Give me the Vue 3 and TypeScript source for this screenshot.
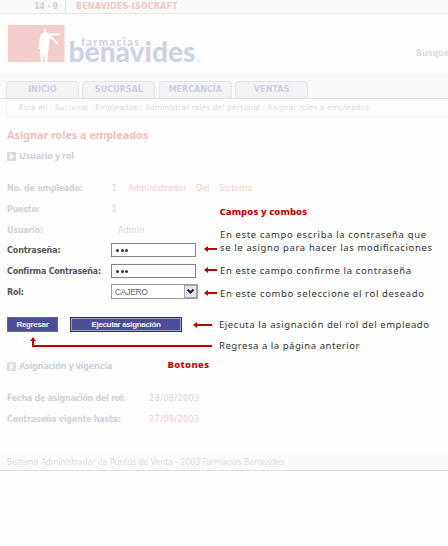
<script setup lang="ts">
interface Note {
  text: string
  x: number
  y: number
  width: number
  title?: boolean
}

const tabs: string[] = ['INICIO', 'SUCURSAL', 'MERCANCÍA', 'VENTAS']

const notes: Note[] = [
  { text: 'Campos y combos', x: 219.5, y: 215, width: 87.5, title: true },
  { text: 'En este campo escriba la contraseña que', x: 220, y: 238, width: 206 },
  { text: 'se le asigno para hacer las modificaciones', x: 220, y: 251, width: 212 },
  { text: 'En este campo confirme la contraseña', x: 220, y: 274, width: 191 },
  { text: 'En este combo seleccione el rol deseado', x: 220, y: 297, width: 204 },
  { text: 'Ejecuta la asignación del rol del empleado', x: 219, y: 328, width: 210 },
  { text: 'Regresa a la página anterior', x: 219, y: 349, width: 140.5 },
  { text: 'Botones', x: 167.5, y: 368, width: 41.5, title: true },
]

const arrows = [
  { x: 204, y: 248, length: 13 },
  { x: 204, y: 269, length: 13 },
  { x: 204, y: 292, length: 13 },
  { x: 193, y: 324, length: 19 },
]
</script>

<template>
  <div class="page">
    <header class="topbar">
      <span class="date">14 - 9</span>
      <span class="branch">BENAVIDES-ISOCRAFT</span>
    </header>

    <div class="brand">
      <svg class="logo" width="200" height="44" viewBox="0 0 200 44">
        <rect x="0" y="3" width="56.500" height="37" fill="#f3cccc" />
        <path d="M36 7.500q1-1.500 2 0v2.500l2 1.200 12 .2v1.600l-9 .3 7 8-1 .8-7-6-.7 5.500L40 29l-.7 11h-2.200L36 30l-.7 10h-2.500L32 27l.5-5-1 5h-1l1-9 1.300-5.800 2.700-1.700z" fill="#fff" />
        <text class="logo-small" x="73" y="24" textLength="58">farmacias</text>
        <text class="logo-big" x="60.500" y="40" textLength="127" lengthAdjust="spacingAndGlyphs">benavides</text>
        <circle cx="190.500" cy="38.500" r="1.500" fill="none" stroke="#d8daea" stroke-width=".7" />
      </svg>
      <span class="search">Busqueda</span>
    </div>

    <nav class="tabs">
      <span v-for="tab in tabs" :key="tab" class="tab">{{ tab }}</span>
    </nav>
    <div class="crumbs">Está en : Sucursal : Empleados : Administrar roles del personal : Asignar roles a empleados</div>

    <main class="content">
      <h1>Asignar roles a empleados</h1>
      <h2 class="user-title">
        <svg width="9" height="9" viewBox="0 0 9 9"><rect width="9" height="9" fill="#d9d9e2" /><path d="M3 1.500 7 4.500 3 7.500z" fill="#fff" /></svg>
        <span>Usuario y rol</span>
      </h2>

      <div class="row first"><b class="label">No. de empleado:</b><span class="value">1</span><span class="red name">Administrador</span><span class="red del">Del</span><span class="red system">Sistema</span></div>
      <div class="row"><b class="label">Puesto:</b><span class="value">1</span></div>
      <div class="row"><b class="label">Usuario:</b><span class="admin">Admin</span></div>
      <div class="row active"><b class="label l-pass">Contraseña:</b><span class="field"><i /><i /><i /></span></div>
      <div class="row active"><b class="label">Confirma Contraseña:</b><span class="field"><i /><i /><i /></span></div>
      <div class="row active">
        <b class="label">Rol:</b>
        <span class="select">
          <span>CAJERO</span>
          <svg width="13" height="13" viewBox="0 0 13 13"><rect x=".5" y=".5" width="12" height="12" fill="#e5e6f0" stroke="#a4a6b5" /><path d="m3.500 4.500 3 3 3-3" fill="none" stroke="#222" stroke-width="2.200" /></svg>
        </span>
      </div>

      <div class="buttons">
        <button type="button" class="back">Regresar</button>
        <button type="button" class="run">Ejecutar asignación</button>
      </div>

      <h2 class="validity-title">
        <svg width="9" height="9" viewBox="0 0 9 9"><rect width="9" height="9" fill="#dedee7" /><path d="M3 1.500 7 4.500 3 7.500z" fill="#fff" /></svg>
        <span>Asignación y vigencia</span>
      </h2>
      <div class="row dates"><b class="label l-date">Fecha de asignación del rol:</b><span class="day">28/08/2003</span></div>
      <div class="row dates"><b class="label">Contraseña vigente hasta:</b><span class="day red">27/09/2003</span></div>
    </main>

    <footer>Sistema Administrador de Puntos de Venta - 2003 Farmacias Benavides</footer>

    <svg class="notes" width="448" height="546" viewBox="0 0 448 546">
      <g v-for="arrow in arrows" :key="arrow.y" fill="#c00000">
        <rect :x="arrow.x + 1" :y="arrow.y" :width="arrow.length - 1" height="2" />
        <path :d="`M${arrow.x} ${arrow.y + 1}l4-3v6z`" />
      </g>
      <path d="M33 340v6h179" fill="none" stroke="#c00000" stroke-width="2" />
      <path d="M33 337l3 4h-6z" fill="#c00000" />
      <text v-for="note in notes" :key="note.text" :x="note.x" :y="note.y" :textLength="note.width" :class="{ title: note.title }">{{ note.text }}</text>
    </svg>
  </div>
</template>

<style>
body {
  margin: 0;
  background: #fefefe;
  overflow: hidden;
}
</style>

<style scoped>
.page {
  position: relative;
  width: 448px;
  height: 546px;
  overflow: hidden;
  background: #fefefe;
  font-family: "DejaVu Sans", Verdana, sans-serif;
  font-size: 8px;
  line-height: 12px;
  color: #d5d5da;
  white-space: nowrap;
}
.topbar {
  box-sizing: border-box;
  height: 14px;
  display: flex;
  background: #fafafa;
  border-bottom: 1px solid #e6e6e6;
  font-weight: bold;
  line-height: 13px;
}
.date {
  box-sizing: border-box;
  width: 66px;
  padding-left: 34px;
  border-right: 1px solid #e5e5e5;
  color: #cdcfdf;
  letter-spacing: -0.3px;
}
.branch {
  padding-left: 10px;
  color: #f3c5c5;
  letter-spacing: 0.15px;
}
.brand {
  display: flex;
  height: 59px;
}
.logo {
  flex: none;
  margin: 8px 0 0 8px;
}
.logo-small {
  font: 900 11px Lato, sans-serif;
  fill: #cfd1e5;
}
.logo-big {
  font: 900 28px Lato, sans-serif;
  fill: #cfd1e5;
}
.search {
  margin: 34px 0 0 208px;
  font-weight: bold;
  color: #dcdce1;
}
.tabs {
  box-sizing: border-box;
  height: 26px;
  padding: 8px 0 0 6px;
  display: flex;
  gap: 3.400px;
  background: #fafafa;
  border-bottom: 1px solid #dedede;
}
.tab {
  box-sizing: border-box;
  width: 73px;
  height: 17px;
  border: 1px solid #e6e6e6;
  border-bottom: 0;
  border-radius: 4px 4px 0 0;
  background: #f2f3f5;
  color: #ced0df;
  text-align: center;
  font-weight: bold;
  line-height: 15px;
}
.crumbs {
  box-sizing: border-box;
  height: 18px;
  margin-left: 6px;
  padding-left: 12px;
  border-left: 1px solid #f4f4f4;
  border-bottom: 1px solid #f6f6f6;
  font-size: 7.500px;
  line-height: 17px;
  letter-spacing: 0.08px;
  color: #d9d9dd;
}
.content {
  height: 338px;
  padding: 0 7px;
}
h1 {
  box-sizing: border-box;
  margin: 0;
  padding-top: 10px;
  height: 33px;
  font: bold 11px/16px "Noto Sans", sans-serif;
  letter-spacing: -0.12px;
  color: #f2bfbf;
}
h2 {
  display: flex;
  align-items: center;
  gap: 3px;
  height: 12px;
  margin: 0;
  font: bold 9px/12px "Noto Sans", sans-serif;
  letter-spacing: -0.17px;
  color: #ccceda;
}
.row {
  display: flex;
  align-items: center;
  height: 20.700px;
}
.first {
  margin-top: 16px;
}
.row:not(.dates) > :not(.field, .select) {
  padding-top: 2px;
}
.label {
  width: 104px;
  flex: none;
  letter-spacing: -0.23px;
  color: #d1d2d7;
}
.value {
  width: 17px;
  padding-left: 1px;
  box-sizing: border-box;
}
.red {
  color: #f5caca;
}
.name {
  width: 68px;
  letter-spacing: 0.2px;
}
.del {
  width: 23px;
}
.system {
  letter-spacing: 0.25px;
}
.admin {
  padding-left: 7px;
  letter-spacing: 0.2px;
}
.active .label {
  color: #55555a;
}
.active .l-pass {
  letter-spacing: -0.1px;
}
.field {
  box-sizing: border-box;
  width: 85px;
  height: 14px;
  border: 1px solid #82828b;
  background: #fff;
  display: flex;
  align-items: center;
  gap: 1.500px;
  padding-left: 4px;
}
.field i {
  width: 3px;
  height: 3px;
  border-radius: 50%;
  background: #333;
}
.select {
  box-sizing: border-box;
  width: 87px;
  height: 15px;
  border: 1px solid #9999a6;
  background: #fff;
  display: flex;
  align-items: center;
  justify-content: space-between;
  padding-left: 3px;
  font: 8.500px "Liberation Sans", sans-serif;
  letter-spacing: -0.3px;
  color: #63636b;
}
.buttons {
  display: flex;
  gap: 12px;
  margin-top: 15px;
}
button {
  box-sizing: border-box;
  margin: 0;
  padding: 0;
  height: 15px;
  border: 1px solid #6365a0;
  background: #4b4f96;
  color: #eeeef5;
  font: bold 8px/12px "Liberation Sans", sans-serif;
  letter-spacing: -0.35px;
}
.back {
  width: 51px;
}
.run {
  width: 112px;
  border: 1px solid #33354d;
  box-shadow: inset 0 0 0 1px #a2a3bd;
}
.validity-title {
  margin-top: 28px;
}
.dates {
  height: 21px;
}
.validity-title + .dates {
  margin-top: 16px;
}
.dates .label {
  width: 142px;
}
.dates .l-date {
  letter-spacing: -0.29px;
}
.day {
  letter-spacing: 0.45px;
}
footer {
  box-sizing: border-box;
  height: 16px;
  padding-left: 7px;
  background: #fafafa;
  border-bottom: 1px solid #e2e2e2;
  line-height: 16px;
  letter-spacing: -0.14px;
  color: #dfdfe2;
}
.notes {
  position: absolute;
  inset: 0;
}
.notes text {
  font: 9.500px "Noto Sans", Tahoma, sans-serif;
  fill: #303030;
}
.notes .title {
  font-weight: 800;
  fill: #c00000;
}
</style>
